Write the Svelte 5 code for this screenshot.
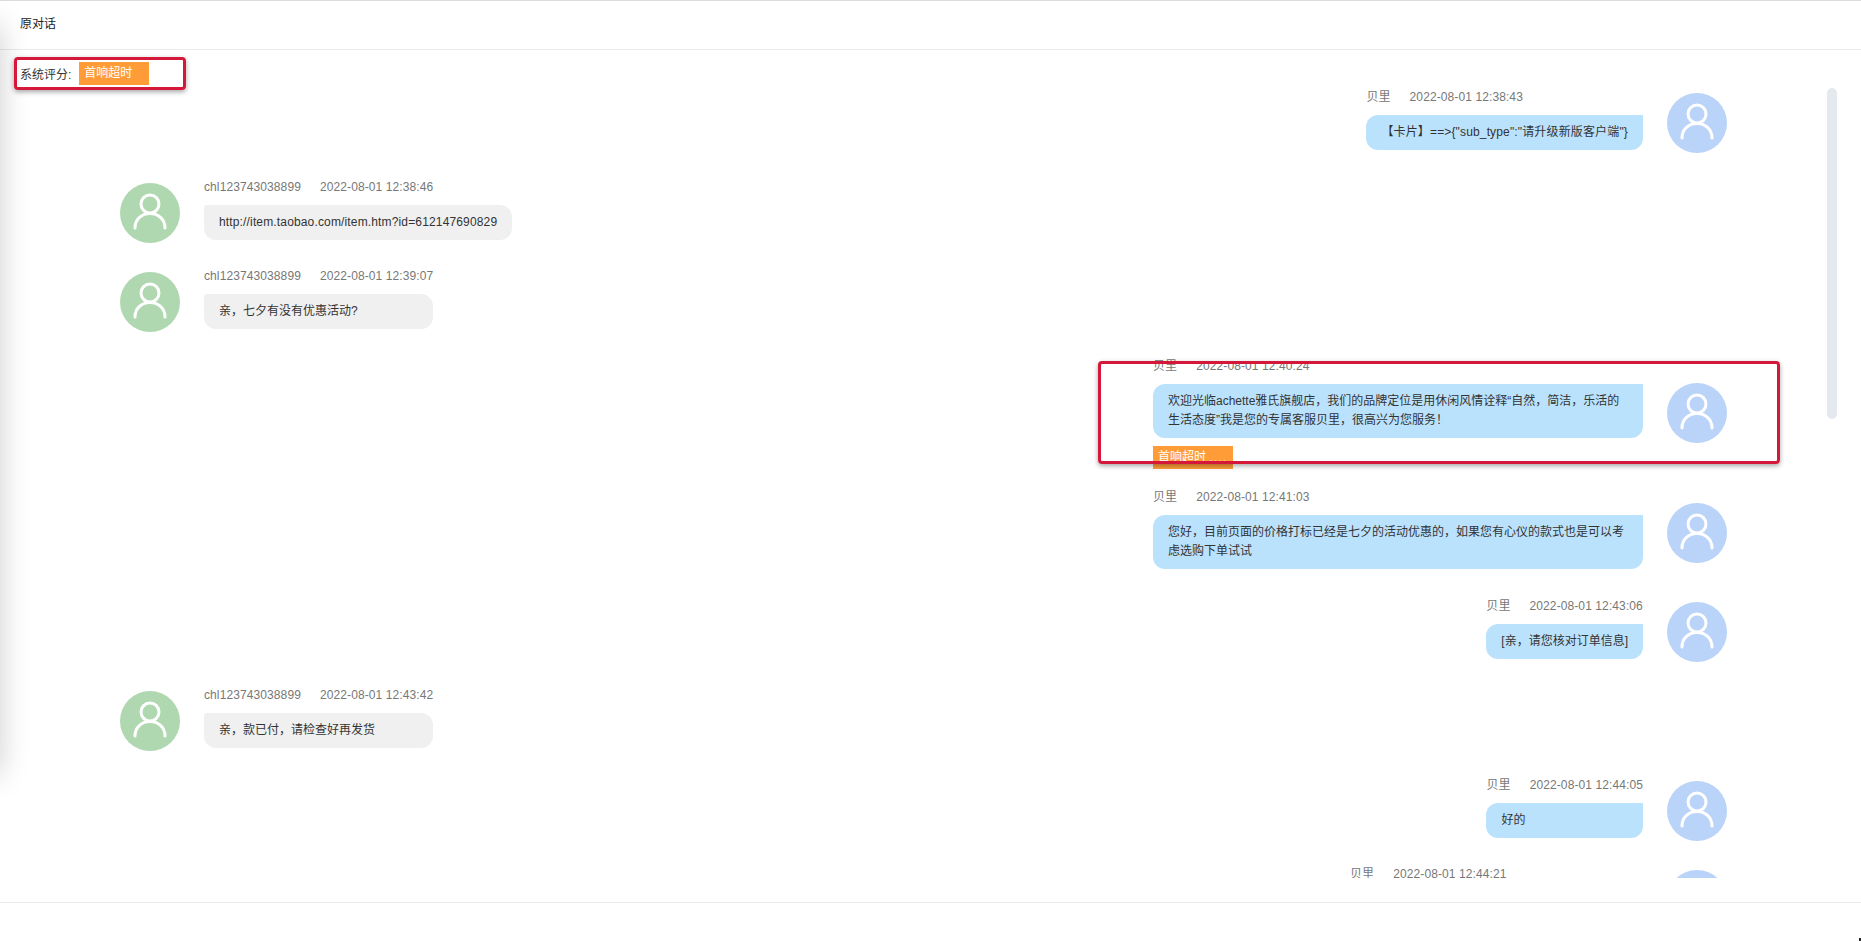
<script>
  const messages = [
    { side: 'right', name: '贝里', time: '2022-08-01 12:38:43', text: '【卡片】==>{"sub_type":"请升级新版客户端"}', latin: true },
    { side: 'left', name: 'chl123743038899', time: '2022-08-01 12:38:46', text: 'http://item.taobao.com/item.htm?id=612147690829', latin: true },
    { side: 'left', name: 'chl123743038899', time: '2022-08-01 12:39:07', text: '亲，七夕有没有优惠活动?' },
    { side: 'right', name: '贝里', time: '2022-08-01 12:40:24', text: '欢迎光临achette雅氏旗舰店，我们的品牌定位是用休闲风情诠释“自然，简洁，乐活的生活态度”我是您的专属客服贝里，很高兴为您服务！', tag: '首响超时', more: true },
    { side: 'right', name: '贝里', time: '2022-08-01 12:41:03', text: '您好，目前页面的价格打标已经是七夕的活动优惠的，如果您有心仪的款式也是可以考虑选购下单试试' },
    { side: 'right', name: '贝里', time: '2022-08-01 12:43:06', text: '[亲，请您核对订单信息]' },
    { side: 'left', name: 'chl123743038899', time: '2022-08-01 12:43:42', text: '亲，款已付，请检查好再发货' },
    { side: 'right', name: '贝里', time: '2022-08-01 12:44:05', text: '好的' },
    { side: 'right', name: '贝里', time: '2022-08-01 12:44:21', text: '', clipped: true }
  ]
</script>

<div class="page">
  <div class="drawer-shadow"></div>

  <header class="header">原对话</header>

  <div class="body">
    <div class="rating">
      <span>系统评分:</span>
      <span class="rating-tag">首响超时</span>
    </div>

    <div class="list">
      {#each messages as m}
        <div class="row {m.side}">
          <div class="avatar">
            <svg viewBox="0 0 60 60" width="60" height="60" fill="none" stroke="#fff" stroke-width="3" stroke-linecap="round">
              <circle cx="30" cy="21" r="9" />
              <path d="M15 45 C15 36 22 30.5 30 30.5 C38 30.5 45 36 45 45" />
            </svg>
          </div>
          <div class="content" class:clipped={m.clipped}>
            <div class="meta">
              <span>{m.name}</span>
              <span>{m.time}</span>
            </div>
            <div class="bubble" class:latin={m.latin}>{m.text}</div>
            {#if m.tag}
              <div class="tag">{m.tag}{#if m.more}<span class="dots">. . . .</span>{/if}</div>
            {/if}
          </div>
        </div>
      {/each}
    </div>

    <div class="scrollbar"></div>
  </div>

  <footer class="footer"></footer>

  <div class="mark mark-rating"></div>
  <div class="mark mark-message"></div>
  <div class="cursor-dot"></div>
</div>

<style>
  :global(body) {
    margin: 0;
    background: #fff;
  }

  .page {
    position: relative;
    height: 941px;
    overflow: hidden;
    border-top: 1px solid #dcdcdc;
    box-sizing: border-box;
    font-family: "Liberation Sans", "Noto Sans CJK SC", sans-serif;
    color: #333;
  }

  .drawer-shadow {
    position: absolute;
    left: -30px;
    top: 24px;
    width: 30px;
    height: 750px;
    box-shadow: 0 0 30px rgba(0, 0, 0, 0.2);
  }

  .header {
    height: 48px;
    padding-left: 20px;
    line-height: 47px;
    font-size: 12px;
    color: #222;
    border-bottom: 1px solid #ebebeb;
  }

  .body {
    position: relative;
    height: 828px;
    overflow: hidden;
  }

  .rating {
    display: flex;
    align-items: center;
    gap: 8px;
    height: 23px;
    margin: 12px 0 5px 20px;
    font-size: 12px;
  }

  .rating-tag {
    width: 70px;
    height: 23px;
    box-sizing: border-box;
    padding-left: 5px;
    line-height: 23px;
    background: #ff9c38;
    color: #fff;
  }

  .list {
    padding: 0 134px 0 120px;
  }

  .row {
    display: flex;
    align-items: center;
    gap: 24px;
    margin-bottom: 23.5px;
  }

  .row.right {
    flex-direction: row-reverse;
  }

  .avatar {
    flex: none;
    width: 60px;
    height: 60px;
    border-radius: 50%;
  }

  .left .avatar {
    background: #afd8b0;
  }

  .right .avatar {
    background: #bad3f9;
  }

  .avatar svg {
    display: block;
  }

  .content {
    display: flex;
    flex-direction: column;
    max-width: 490px;
  }

  .content.clipped {
    min-width: 293px;
  }

  .meta {
    display: flex;
    gap: 19px;
    height: 14px;
    line-height: 14px;
    margin-bottom: 11px;
    font-size: 12px;
    letter-spacing: 0.1px;
    color: #777;
    white-space: nowrap;
  }

  .bubble {
    min-height: 19px;
    padding: 8px 15px;
    font-size: 12px;
    line-height: 19px;
    margin-bottom: 6px;
  }

  .bubble.latin {
    letter-spacing: 0.15px;
  }

  .left .bubble {
    background: #f0f0f0;
    border-radius: 3px 12px 12px 12px;
  }

  .right .bubble {
    background: #bbe2fd;
    border-radius: 12px 0 12px 12px;
  }

  .tag {
    align-self: flex-start;
    width: 80px;
    height: 23px;
    margin: 2px 0 -2px;
    box-sizing: border-box;
    padding-left: 5px;
    line-height: 23px;
    font-size: 12px;
    background: #ff9c38;
    color: #fff;
    white-space: nowrap;
  }

  .dots {
    margin-left: 4px;
    font-size: 8px;
  }

  .scrollbar {
    position: absolute;
    left: 1827px;
    top: 38px;
    width: 10px;
    height: 331px;
    border-radius: 5px;
    background: #e4e8ef;
  }

  .footer {
    margin-top: 24px;
    border-top: 1px solid #ebebeb;
  }

  .mark {
    position: absolute;
    border: 3px solid #d5173a;
    border-radius: 4px;
    box-shadow: 0 2px 5px rgba(0, 0, 0, 0.35);
    box-sizing: border-box;
  }

  .mark-rating {
    left: 14px;
    top: 56px;
    width: 172px;
    height: 33px;
  }

  .mark-message {
    left: 1098px;
    top: 360px;
    width: 682px;
    height: 103px;
  }

  .cursor-dot {
    position: absolute;
    right: 0;
    bottom: 0;
    width: 2px;
    height: 3px;
    background: #222;
  }
</style>
